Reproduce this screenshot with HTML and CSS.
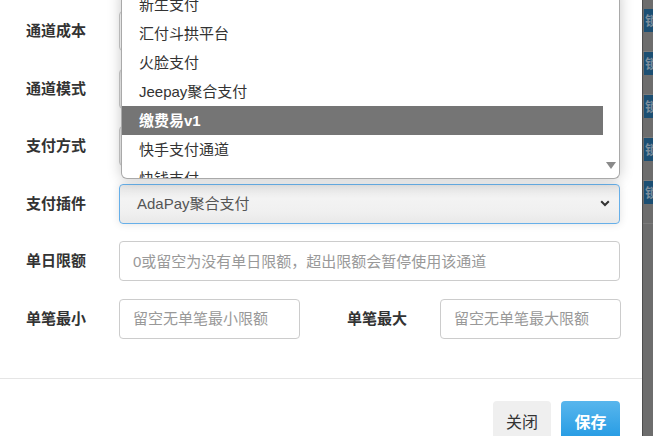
FILE: index.html
```html
<!DOCTYPE html>
<html lang="zh-CN">
<head>
<meta charset="utf-8">
<title>通道设置</title>
<link rel="stylesheet" href="styles.css">
</head>
<body>
<div class="page">
  <div class="modal">
    <div class="modal-body">
      <div class="row">
        <label class="lbl">通道成本</label>
        <input class="ctl" type="text">
      </div>
      <div class="row">
        <label class="lbl">通道模式</label>
        <div class="ctl sel"></div>
      </div>
      <div class="row">
        <label class="lbl">支付方式</label>
        <div class="ctl sel"></div>
      </div>
      <div class="row">
        <label class="lbl">支付插件</label>
        <div class="ctl sel focus">
          <span>AdaPay聚合支付</span>
          <svg class="chev" width="10" height="7" viewBox="0 0 10 7"><polyline points="1.2,1.2 5,5 8.8,1.2" fill="none" stroke="#333" stroke-width="2"/></svg>
        </div>
      </div>
      <div class="row">
        <label class="lbl">单日限额</label>
        <input class="ctl" type="text" placeholder="0或留空为没有单日限额，超出限额会暂停使用该通道">
      </div>
      <div class="row split">
        <label class="lbl">单笔最小</label>
        <input class="ctl half" type="text" placeholder="留空无单笔最小限额">
        <span class="spacer"></span>
        <label class="lbl">单笔最大</label>
        <input class="ctl half" type="text" placeholder="留空无单笔最大限额">
      </div>
    </div>
    <div class="modal-footer">
      <button class="btn btn-default">关闭</button>
      <button class="btn btn-primary">保存</button>
    </div>

    <div class="popup">
      <ul class="options">
        <li>新生支付</li>
        <li>汇付斗拱平台</li>
        <li>火脸支付</li>
        <li>Jeepay聚合支付</li>
        <li class="hl">缴费易v1</li>
        <li>快手支付通道</li>
        <li>快钱支付</li>
      </ul>
      <div class="scroll">
        <svg width="10" height="7" viewBox="0 0 10 7"><polygon points="0,0 10,0 5,7" fill="#8a8a8a"/></svg>
      </div>
    </div>
  </div>
  <div class="backdrop">
    <div class="bg-row"><span class="bg-btn">锁</span></div>
    <div class="bg-row"><span class="bg-btn">锁</span></div>
    <div class="bg-row"><span class="bg-btn">锁</span></div>
    <div class="bg-row"><span class="bg-btn">锁</span></div>
    <div class="bg-row"><span class="bg-btn">锁</span></div>
  </div>
</div>
</body>
</html>
```

FILE: styles.css
```css
* { box-sizing: border-box; }
html, body {
  margin: 0;
  padding: 0;
  width: 653px;
  height: 436px;
  overflow: hidden;
  font-family: "Liberation Sans", "Noto Sans CJK SC", sans-serif;
  font-size: 15px;
  color: #333;
  background: #6d6d6d;
}
.page {
  display: flex;
  height: 436px;
}
.modal {
  position: relative;
  width: 643px;
  flex: none;
  background: #fff;
  border-right: 1px solid #4d4d4d;
}
.modal-body {
  padding: 11px 22px 39px 26px;
  display: flex;
  flex-direction: column;
  gap: 17.6px;
}
.row {
  display: flex;
  align-items: center;
  height: 40px;
}
.lbl {
  width: 93px;
  flex: none;
  font-weight: bold;
  font-size: 15px;
  line-height: 20px;
  color: #333;
}
.ctl {
  flex: 1;
  height: 40px;
  border: 1px solid #ccc;
  border-radius: 4px;
  padding: 0 13px;
  font-family: inherit;
  font-size: 15px;
  color: #555;
  background: #fff;
  outline: none;
}
.ctl::placeholder { color: #999; }
.sel {
  display: flex;
  align-items: center;
  padding-left: 17px;
  padding-right: 9px;
  justify-content: space-between;
  background: linear-gradient(#e4e4e4, #f3f3f3 35%, #f0f0f0 70%, #e9e9e9);
}
.sel span { line-height: 20px; color: #555; }
.sel.focus {
  border-color: #66afe9;
  box-shadow: 0 0 8px rgba(0, 0, 0, 0.12);
}
.chev { display: block; }
.split .half { flex: none; width: 181px; }
.spacer { width: 47px; flex: none; }
.modal-footer {
  border-top: 1px solid #e5e5e5;
  padding: 22px 22px 0 0;
  display: flex;
  justify-content: flex-end;
  gap: 10px;
}
.btn {
  height: 40px;
  border: none;
  border-radius: 4px;
  font-family: inherit;
  font-size: 16px;
  padding: 0;
}
.btn-default {
  width: 58px;
  background: #efefef;
  color: #333;
}
.btn-primary {
  width: 59px;
  background: linear-gradient(#58b6ed, #239ae3);
  color: #fff;
  font-weight: bold;
}
.popup {
  position: absolute;
  left: 121px;
  top: -10px;
  width: 499px;
  height: 189px;
  background: #fff;
  border: 1px solid #a9a9a9;
  border-top: none;
  border-radius: 0 0 6px 6px;
  box-shadow: 0 0 14px rgba(0, 0, 0, 0.22);
  display: flex;
  overflow: hidden;
}
.options {
  list-style: none;
  margin: 0;
  padding: 0;
  flex: 1;
}
.options li {
  height: 29px;
  line-height: 29px;
  padding-left: 17px;
  color: #333;
  font-size: 15px;
  white-space: nowrap;
}
.options li.hl {
  background: #757575;
  color: #fff;
  font-weight: 600;
}
.scroll {
  width: 16px;
  flex: none;
  display: flex;
  align-items: flex-end;
  justify-content: center;
  padding-bottom: 9px;
}
.backdrop {
  flex: 1;
  background: #6d6d6d;
  padding-top: 9px;
  display: flex;
  flex-direction: column;
  overflow: hidden;
}
.bg-row {
  height: 43px;
  flex: none;
  padding-left: 1px;
  border-bottom: 1px solid #7b7b7b;
}
.bg-btn {
  display: block;
  width: 12px;
  height: 23px;
  background: #1c4f73;
  color: #7d8d9b;
  font-size: 13px;
  font-weight: bold;
  line-height: 23px;
  padding-left: 1px;
  overflow: hidden;
  white-space: nowrap;
}
```
